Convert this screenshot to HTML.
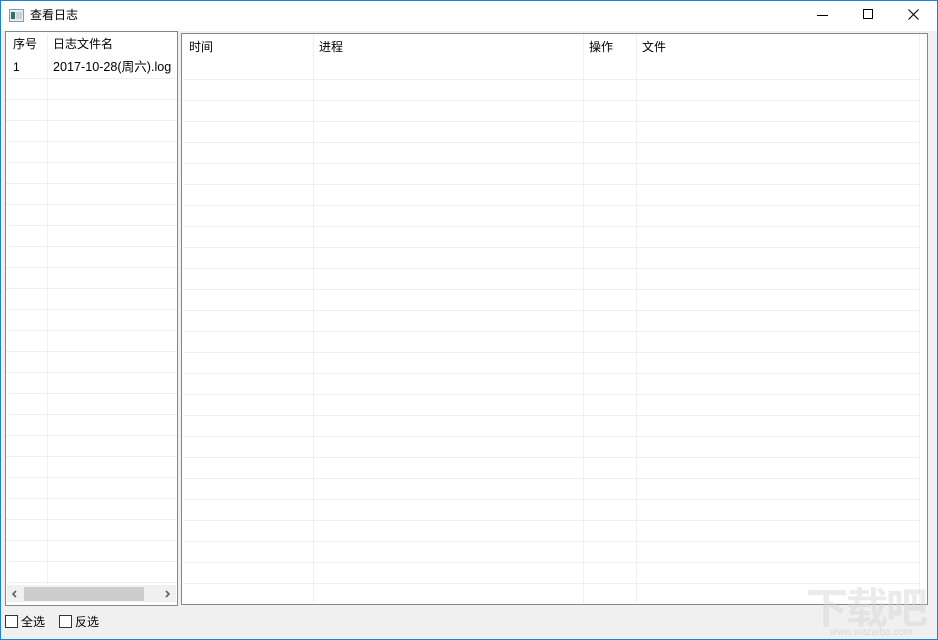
<!DOCTYPE html><html><head><style>
*{margin:0;padding:0;box-sizing:border-box}
body{width:938px;height:640px;background:#f0f0f0;font-family:"Liberation Sans","Noto Sans CJK SC",sans-serif;font-size:12px;line-height:14px;color:#000;position:relative;overflow:hidden}
.frame{position:absolute;inset:0;border:1px solid #1883d7;pointer-events:none}
.title{position:absolute;left:0;top:0;width:938px;height:31px;background:#fff}
.abs{position:absolute;white-space:nowrap}
.grid{background-color:#fff;background-image:repeating-linear-gradient(to bottom,transparent 0 20px,#f0f0f0 20px 21px)}
.vl{position:absolute;width:1px;background:#f0f0f0}
</style></head><body>
<div class="title">
 <svg class="abs" style="left:9px;top:9px" width="15" height="13"><rect x="0.5" y="0.5" width="14" height="12" fill="#e8ecef" stroke="#8a9aa6"/><rect x="2" y="3" width="4" height="7" fill="#2f6f6f"/><rect x="7" y="3" width="6" height="7" fill="#c8d2da"/></svg>
 <div class="abs" style="left:30px;top:8px">查看日志</div>
 <div class="abs" style="left:817px;top:15px;width:11px;height:1px;background:#000"></div>
 <div class="abs" style="left:863px;top:9px;width:10px;height:10px;border:1px solid #000"></div>
 <svg class="abs" style="left:908px;top:9px" width="11" height="11"><path d="M0.5 0.5L10.5 10.5M10.5 0.5L0.5 10.5" stroke="#000" stroke-width="1.1"/></svg>
</div>
<div class="abs" style="left:5px;top:31px;width:173px;height:575px;border:1px solid #828790;background:#fff">
 <div class="abs" style="left:7px;top:5px">序号</div>
 <div class="abs" style="left:47px;top:5px">日志文件名</div>
 <div class="abs grid" style="left:0;top:26px;width:171px;height:526px"></div>
 <div class="vl" style="left:41px;top:2px;height:550px"></div>
 <div class="abs" style="left:7px;top:28px">1</div>
 <div class="abs" style="left:47px;top:28px;font-size:12.6px">2017-10-28(周六).log</div>
 <div class="abs" style="left:1px;top:553px;width:169px;height:17px;background:#f0f0f0"></div>
 <div class="abs" style="left:18px;top:555px;width:120px;height:14px;background:#cdcdcd"></div>
 <svg class="abs" style="left:5px;top:557px" width="8" height="10"><path d="M5 2L2 5L5 8" stroke="#606060" stroke-width="1.6" fill="none"/></svg>
 <svg class="abs" style="left:157px;top:557px" width="8" height="10"><path d="M3 2L6 5L3 8" stroke="#606060" stroke-width="1.6" fill="none"/></svg>
</div>
<div class="abs" style="left:181px;top:33px;width:747px;height:572px;border:1px solid #828790;background:#fff">
 <div class="abs" style="left:7px;top:6px">时间</div>
 <div class="abs" style="left:137px;top:6px">进程</div>
 <div class="abs" style="left:407px;top:6px">操作</div>
 <div class="abs" style="left:460px;top:6px">文件</div>
 <div class="abs grid" style="left:1px;top:25px;width:737px;height:545px"></div>
 <div class="vl" style="left:131px;top:0;height:570px"></div>
 <div class="vl" style="left:401px;top:0;height:570px"></div>
 <div class="vl" style="left:454px;top:0;height:570px"></div>
 <div class="vl" style="left:737px;top:0;height:570px"></div>
</div>
<div class="abs" style="left:5px;top:615px;width:13px;height:13px;border:1px solid #333;background:#fff"></div>
<div class="abs" style="left:21px;top:615px">全选</div>
<div class="abs" style="left:59px;top:615px;width:13px;height:13px;border:1px solid #333;background:#fff"></div>
<div class="abs" style="left:75px;top:615px">反选</div>
<div class="abs" style="left:806px;top:586px;font-size:42px;line-height:46px;color:rgba(210,210,210,0.45);font-weight:bold;letter-spacing:-2px">下载吧</div>
<div class="abs" style="left:830px;top:627px;font-size:10px;line-height:11px;color:rgba(200,200,200,0.6)">www.xiazaiba.com</div>
<div class="frame"></div>
</body></html>
